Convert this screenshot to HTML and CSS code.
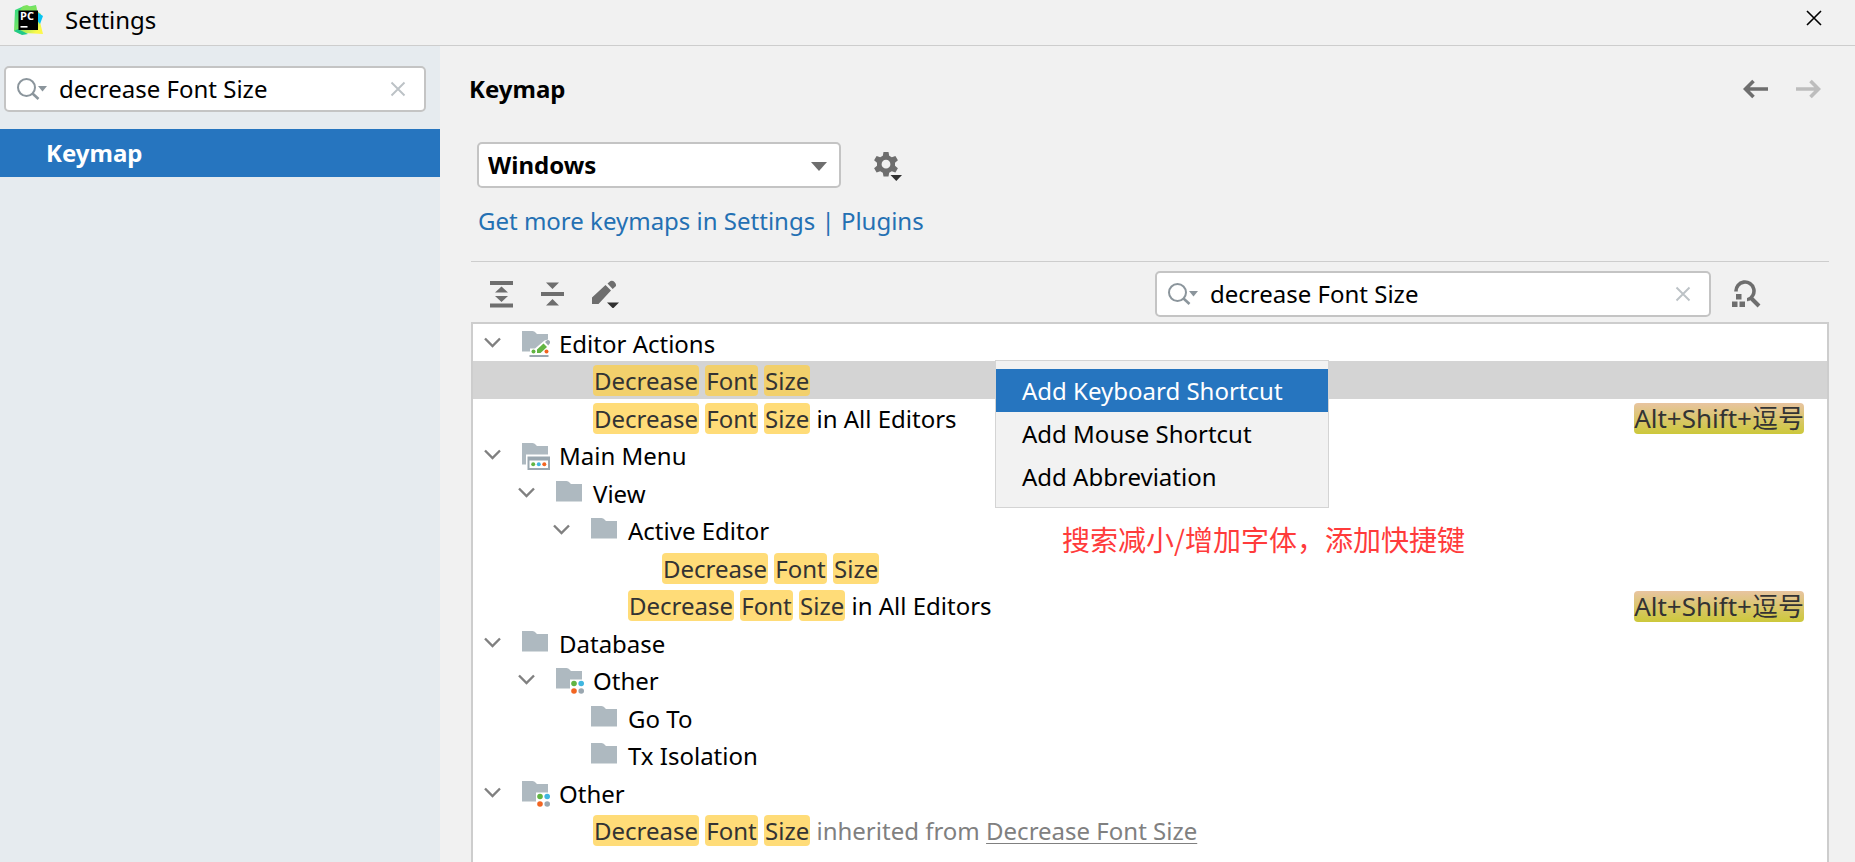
FILE: index.html
```html
<!DOCTYPE html>
<html lang="en">
<head>
<meta charset="utf-8">
<title>Settings</title>
<link rel="stylesheet" href="styles.css">
</head>
<body>
<svg class="defs" aria-hidden="true">
  <symbol id="chevron" viewBox="0 0 17 11"><path d="M1 1.500l7.500 7.500L16 1.500" fill="none" stroke="#808080" stroke-width="2.400"/></symbol>
  <symbol id="folder" viewBox="0 0 28 28"><path d="M0 1h10.500q2 0 3 1.500l1.500 1.500H26v17.500H0z" fill="#aeb9c0"/></symbol>
  <symbol id="folder-editor" viewBox="0 0 28 28">
    <path d="M0 1h10.500q2 0 3 1.500l1.500 1.500H26v5.500l-3.500 1L13 18.500H8v3H0z" fill="#aeb9c0"/>
    <rect x="7.500" y="25" width="19" height="2" fill="#9aa7b0"/>
    <path d="M15 23v-3.500l6.500-6 3.500 3.500-6.500 6z" fill="#62b543"/>
    <path d="M23 12l2-1.800q1.500-.8 2.500.5t.2 2.700L26.200 15.500z" fill="#9aa7b0"/>
    <circle cx="11.500" cy="21.500" r="2" fill="#62b543"/><circle cx="24.500" cy="21.500" r="2" fill="#f26522"/>
  </symbol>
  <symbol id="folder-menu" viewBox="0 0 28 28">
    <path d="M0 1h10.500q2 0 3 1.500l1.500 1.500H26v8.500H4v10H0z" fill="#aeb9c0"/>
    <path d="M5.500 14.500H28V28H5.500zM7.500 18.500v7.500H26v-7.500z" fill="#9aa7b0" fill-rule="evenodd"/>
    <circle cx="11.200" cy="22.200" r="2" fill="#62b543"/><circle cx="16.800" cy="22.200" r="2" fill="#40b6e0"/><circle cx="22.300" cy="22.200" r="2" fill="#f26522"/>
  </symbol>
  <symbol id="folder-dots" viewBox="0 0 28 28">
    <path d="M0 1h10.500q2 0 3 1.500l1.500 1.500H26v8.500H14v9H0z" fill="#aeb9c0"/>
    <circle cx="18" cy="16.500" r="2.800" fill="#62b543"/><circle cx="25.200" cy="16.500" r="2.800" fill="#40b6e0"/>
    <circle cx="18" cy="24" r="2.800" fill="#f26522"/><circle cx="25.200" cy="24" r="2.800" fill="#9aa7b0"/>
  </symbol>
  <symbol id="search" viewBox="0 0 30 24">
    <circle cx="9.500" cy="10.500" r="8.500" fill="none" stroke="#8b959c" stroke-width="2"/>
    <path d="M15.500 16.500l6 5.500" stroke="#8b959c" stroke-width="2.600" fill="none"/><path d="M21 9h9l-4.500 5.500z" fill="#8b959c"/>
  </symbol>
  <symbol id="clear" viewBox="0 0 16 16"><path d="M1.500 1.500l13 13M14.500 1.500l-13 13" stroke="#bcc2c6" stroke-width="1.900" fill="none"/></symbol>
</svg>

<header class="titlebar">
  <svg class="logo" viewBox="0 0 31 30" aria-hidden="true">
    <defs><linearGradient id="lg" x1="0" y1="0" x2="1" y2="1"><stop offset="0" stop-color="#21d789"/><stop offset=".5" stop-color="#7fe660"/><stop offset=".85" stop-color="#fcf84a"/></linearGradient></defs>
    <path d="M2 5L11 1l3 1 9-2 1 6 4 3-1 8 3 12-19-1-4 1-6-3z" fill="url(#lg)"/>
    <path d="M10 1l4-1 4 2 5-1 1 5-18 1z" fill="#7de35c"/>
    <path d="M24 7l6 4-3 8-4-5z" fill="#07c3f2"/><path d="M1 26l4-2 10 5-6 1z" fill="#20c98a"/>
    <rect x="5.500" y="5.500" width="19.500" height="19.500"/>
    <text x="7" y="15" class="logo-text">PC</text><rect x="7.500" y="21" width="7" height="1.600" fill="#fff"/>
  </svg>
  <h1 class="window-title">Settings</h1>
  <button class="icon-button window-close" aria-label="Close"><svg width="16" height="16" viewBox="0 0 16 16"><path d="M1 1l14 14M15 1L1 15" stroke="#000" stroke-width="1.600"/></svg></button>
</header>

<div class="window">
  <aside class="sidebar">
    <div class="search-box side-search">
      <svg class="search-icon"><use href="#search"/></svg>
      <input type="text" aria-label="Search settings" value="decrease Font Size">
      <button class="icon-button" aria-label="Clear"><svg width="16" height="16"><use href="#clear"/></svg></button>
    </div>
    <nav><a class="nav-item" href="#keymap">Keymap</a></nav>
  </aside>

  <main class="content" id="keymap">
    <div class="page-head">
      <h2 class="page-title">Keymap</h2>
      <button class="icon-button" aria-label="Back"><svg width="26" height="20" viewBox="0 0 26 20"><path d="M25 10H3M10.500 2L2.500 10l8 8" fill="none" stroke="#6e6e6e" stroke-width="3.600"/></svg></button>
      <button class="icon-button" aria-label="Forward" disabled><svg width="26" height="20" viewBox="0 0 26 20"><path d="M1 10h22M15.500 2l8 8-8 8" fill="none" stroke="#bdbdbd" stroke-width="3.600"/></svg></button>
    </div>

    <div class="scheme">
      <div class="combo">
        <select aria-label="Keymap scheme"><option>Windows</option></select>
        <svg class="combo-arrow" width="16" height="9" viewBox="0 0 16 9"><path d="M0 0h16L8 9z" fill="#6e6e6e"/></svg>
      </div>
      <button class="icon-button scheme-actions" aria-label="Scheme actions">
        <svg width="28" height="30" viewBox="0 0 28 30">
          <path fill="#6e6e6e" fill-rule="evenodd" d="M9.500 1h5l.7 3.800 2.600 1.500 3.600-1.300 2.500 4.300-2.900 2.500v3l2.900 2.500-2.500 4.300-3.600-1.300-2.600 1.500-.7 3.700h-5l-.7-3.700-2.600-1.500-3.600 1.300L.1 17.300 3 14.800v-3L.1 9.300 2.600 5l3.600 1.300 2.600-1.500zM12 8.800a4.400 4.400 0 1 0 0 8.800 4.400 4.400 0 1 0 0-8.800z"/>
          <path d="M16.500 24H28l-5.700 6z" fill="#303030"/>
        </svg>
      </button>
    </div>
    <a class="more-link" href="#plugins">Get more keymaps in Settings | Plugins</a>

    <div class="toolbar">
      <button class="icon-button" aria-label="Expand all"><svg width="24" height="28" viewBox="0 0 24 28"><path d="M0 1h23v4H0zM0 23.500h23v4H0zM5 12.500h13l-6.500-6zM5 16h13l-6.500 6z" fill="#6e6e6e"/></svg></button>
      <button class="icon-button" aria-label="Collapse all"><svg width="24" height="28" viewBox="0 0 24 28"><path d="M0 12h23v4H0zM5 2.500h13l-6.500 6.500zM5 25.500h13L11.500 19z" fill="#6e6e6e"/></svg></button>
      <button class="icon-button" aria-label="Edit shortcut"><svg width="28" height="28" viewBox="0 0 28 28"><path d="M0 24v-6.500L13.500 5l5.500 5.500L6.500 24zM15.500 3.500L18.500 1q2-1 4 1t1.500 4L20.700 9z" fill="#6e6e6e"/><path d="M15 22.500h12L21 28.500z" fill="#303030"/></svg></button>
      <div class="search-box tree-search">
        <svg class="search-icon"><use href="#search"/></svg>
        <input type="text" aria-label="Search actions" value="decrease Font Size">
        <button class="icon-button" aria-label="Clear"><svg width="16" height="16"><use href="#clear"/></svg></button>
      </div>
      <button class="icon-button" aria-label="Find by shortcut"><svg width="30" height="28" viewBox="0 0 30 28"><path d="M4 11.500a9 9 0 1 1 12 8" fill="none" stroke="#6e6e6e" stroke-width="3.600"/><path d="M18 17l9 9" stroke="#6e6e6e" stroke-width="4"/><path d="M15 21.500V18h5zM4 14h5.500v5.500H4zM0 21.500h5.500V27H0zM7.500 21.500H13V27H7.500z" fill="#6e6e6e"/></svg></button>
    </div>

    <div class="tree-pane">
      <ul class="tree">
        <li class="row level-0"><button class="toggle" aria-label="Collapse"><svg><use href="#chevron"/></svg></button><svg class="icon"><use href="#folder-editor"/></svg><span class="label">Editor Actions</span></li>
        <li class="row level-1 selected"><span class="label"><mark>Decrease</mark> <mark>Font</mark> <mark>Size</mark></span></li>
        <li class="row level-1"><span class="label"><mark>Decrease</mark> <mark>Font</mark> <mark>Size</mark> in All Editors</span><kbd class="shortcut">Alt+Shift+逗号</kbd></li>
        <li class="row level-0"><button class="toggle" aria-label="Collapse"><svg><use href="#chevron"/></svg></button><svg class="icon"><use href="#folder-menu"/></svg><span class="label">Main Menu</span></li>
        <li class="row level-1"><button class="toggle" aria-label="Collapse"><svg><use href="#chevron"/></svg></button><svg class="icon"><use href="#folder"/></svg><span class="label">View</span></li>
        <li class="row level-2"><button class="toggle" aria-label="Collapse"><svg><use href="#chevron"/></svg></button><svg class="icon"><use href="#folder"/></svg><span class="label">Active Editor</span></li>
        <li class="row level-3"><span class="label"><mark>Decrease</mark> <mark>Font</mark> <mark>Size</mark></span></li>
        <li class="row level-2"><span class="label"><mark>Decrease</mark> <mark>Font</mark> <mark>Size</mark> in All Editors</span><kbd class="shortcut">Alt+Shift+逗号</kbd></li>
        <li class="row level-0"><button class="toggle" aria-label="Collapse"><svg><use href="#chevron"/></svg></button><svg class="icon"><use href="#folder"/></svg><span class="label">Database</span></li>
        <li class="row level-1"><button class="toggle" aria-label="Collapse"><svg><use href="#chevron"/></svg></button><svg class="icon"><use href="#folder-dots"/></svg><span class="label">Other</span></li>
        <li class="row level-2"><svg class="icon"><use href="#folder"/></svg><span class="label">Go To</span></li>
        <li class="row level-2"><svg class="icon"><use href="#folder"/></svg><span class="label">Tx Isolation</span></li>
        <li class="row level-0"><button class="toggle" aria-label="Collapse"><svg><use href="#chevron"/></svg></button><svg class="icon"><use href="#folder-dots"/></svg><span class="label">Other</span></li>
        <li class="row level-1"><span class="label"><mark>Decrease</mark> <mark>Font</mark> <mark>Size</mark> <span class="inherited">inherited from <a href="#decrease">Decrease Font Size</a></span></span></li>
      </ul>
      <div class="popup">
        <div class="menu" role="menu">
          <button class="menu-item active" role="menuitem">Add Keyboard Shortcut</button>
          <button class="menu-item" role="menuitem">Add Mouse Shortcut</button>
          <button class="menu-item" role="menuitem">Add Abbreviation</button>
        </div>
        <p class="note">搜索减小/增加字体，添加快捷键</p>
      </div>
    </div>
  </main>
</div>
</body>
</html>
```
FILE: styles.css
```css
* { box-sizing: border-box; }

body {
  margin: 0;
  height: 100vh;
  display: flex;
  flex-direction: column;
  overflow: hidden;
  background: #f1f1f1;
  color: #000;
  font: 24px/32px "Noto Sans", "Noto Sans CJK SC", sans-serif;
}

button, input, select { font: inherit; color: inherit; }
h1, h2, p, ul { margin: 0; padding: 0; }
svg { display: block; }
.defs { position: absolute; width: 0; height: 0; }

.icon-button {
  display: flex;
  padding: 0;
  border: 0;
  background: none;
}

/* Title bar */
.titlebar {
  display: flex;
  align-items: center;
  height: 46px;
  padding: 0 33px 6px 13px;
  border-bottom: 1px solid #cdcdcd;
}
.logo { width: 31px; height: 30px; }
.logo-text { font: bold 11px "Open Sans", sans-serif; fill: #fff; }
.window-title { margin-left: 21px; font-size: 24px; font-weight: 400; }
.window-close { margin: 0 0 3px auto; }

.window { flex: 1; display: flex; min-height: 0; }

/* Sidebar */
.sidebar { width: 440px; flex: none; background: #e6ebef; }
.search-box {
  display: flex;
  align-items: center;
  height: 46px;
  padding: 0 18px 0 11px;
  border: 2px solid #c4c4c4;
  border-radius: 5px;
  background: #fff;
}
.side-search { margin: 20px 14px 17px 4px; }
.search-icon { width: 30px; height: 24px; flex: none; }
.search-box input {
  flex: 1;
  min-width: 0;
  margin: 0 12px;
  padding: 0;
  border: 0;
  outline: 0;
  background: none;
}
.nav-item {
  display: block;
  padding: 8px 46px;
  background: #2675bf;
  color: #fff;
  font-weight: 700;
  text-decoration: none;
}

/* Content */
.content {
  flex: 1;
  min-width: 0;
  display: flex;
  flex-direction: column;
  padding: 27px 26px 0 31px;
}
.page-head { display: flex; align-items: center; gap: 26px; padding-right: 8px; }
.page-title { margin: 0 auto 0 -2px; font-size: 24px; }
.scheme { display: flex; align-items: center; gap: 33px; margin: 37px 0 17px 6px; }
.scheme-actions { padding-top: 2px; }
.combo { position: relative; width: 364px; }
.combo select {
  width: 100%;
  height: 46px;
  padding: 0 9px;
  appearance: none;
  border: 2px solid #c4c4c4;
  border-radius: 5px;
  background: #fff;
  font-weight: 700;
}
.combo-arrow { position: absolute; right: 14px; top: 20px; pointer-events: none; }
.more-link { align-self: flex-start; margin-left: 7px; color: #2470b3; text-decoration: none; }

.toolbar {
  display: flex;
  align-items: center;
  gap: 27px;
  margin-top: 24px;
  padding: 9px 67px 5px 19px;
  border-top: 1px solid #cdcdcd;
}
.tree-search { flex: 0 1 556px; margin-left: auto; margin-right: -6px; }

/* Tree */
.tree-pane {
  position: relative;
  flex: 1;
  min-height: 0;
  border: 2px solid #cdcdcd;
  border-bottom: 0;
  background: #fff;
}
.tree { list-style: none; }
.row { display: flex; align-items: center; height: 37px; padding-top: 2px; padding-right: 23px; }
.row:nth-child(even) { height: 38px; }
.selected { background: #d4d4d4; }
.toggle { width: 38px; margin: 0 0 3px; padding: 0; border: 0; background: none; }
.toggle svg { width: 17px; height: 11px; }
.icon { width: 28px; height: 28px; margin-right: 9px; flex: none; }
.label { white-space: nowrap; }
.level-0 { padding-left: 11px; }
.level-1 { padding-left: 45px; }
.level-2 { padding-left: 80px; }
.level-3 { padding-left: 114px; }
.row > .icon:first-child { margin-left: 38px; }
.row > .label:first-child { margin-left: 75px; }
mark {
  display: inline-block;
  padding: 0 1px;
  line-height: 31px;
  border-radius: 4px;
  background: #ffdc78;
  color: #333;
}
.selected mark { background: #f2d06c; }
.shortcut {
  margin-left: auto;
  font: inherit;
  font-size: 26px;
  line-height: 31px;
  border-radius: 4px;
  background: linear-gradient(#e8c4a0, #ccc83a);
  color: #333;
}
.inherited, .inherited a { color: #808080; }
.inherited a { text-decoration-thickness: 1px; text-underline-offset: 3px; }

/* Context menu */
.popup { position: absolute; left: 522px; top: 36px; }
.menu {
  width: 334px;
  padding: 8px 0 9px;
  border: 1px solid #d4d4d4;
  background: #f2f2f2;
}
.menu-item {
  display: block;
  width: 100%;
  height: 43px;
  padding: 0 26px;
  border: 0;
  background: none;
  text-align: left;
}
.menu-item.active { background: #2675bf; color: #fff; }
.note {
  margin: 15px 0 0 67px;
  color: #ff3b3b;
  font: 28px/32px "Noto Sans CJK SC", sans-serif;
  white-space: nowrap;
}
```
